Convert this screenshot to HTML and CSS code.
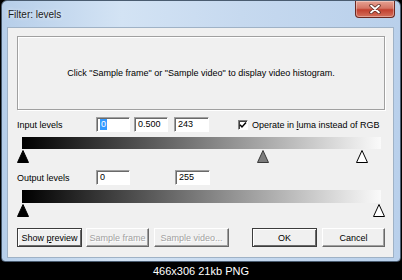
FILE: index.html
```html
<!DOCTYPE html>
<html>
<head>
<meta charset="utf-8">
<link rel="stylesheet" href="styles.css">
</head>
<body>
<div class="screen">
  <div class="window">
    <div class="titlebar">
      <span class="title">Filter: levels</span>
      <div class="close">
        <svg width="14" height="10" viewBox="0 0 14 10">
          <path d="M3 1.5 L11 8.5 M11 1.5 L3 8.5" stroke="#5a2a22" stroke-width="3.4" stroke-linecap="round"/>
          <path d="M3 1.5 L11 8.5 M11 1.5 L3 8.5" stroke="#ffffff" stroke-width="1.8" stroke-linecap="round"/>
        </svg>
      </div>
    </div>
    <div class="client">
      <div class="histogram">Click "Sample frame" or "Sample video" to display video histogram.</div>

      <div class="row">
        <span class="label">Input levels</span>
        <div class="field f1"><span class="hl">0</span></div>
        <div class="field f2">0.500</div>
        <div class="field f3">243</div>
        <div class="check">
          <span class="box">
            <svg width="8" height="8" viewBox="0 0 8 8"><path d="M1 3.8 L3 6 L7 1.6" fill="none" stroke="#000" stroke-width="1.5"/></svg>
          </span>
          <span>Operate in <u>l</u>uma instead of RGB</span>
        </div>
      </div>
      <div class="slider">
        <div class="bar"></div>
        <div class="track">
          <svg class="tri" style="left:-5px" width="12" height="13" viewBox="0 0 12 13"><polygon points="6,0.5 11.5,12.5 0.5,12.5" fill="#000" stroke="#000"/></svg>
          <svg class="tri" style="left:235px" width="12" height="13" viewBox="0 0 12 13"><polygon points="6,0.5 11.5,12.5 0.5,12.5" fill="#7c7c7c" stroke="#3a3a3a"/></svg>
          <svg class="tri" style="left:334px" width="12" height="13" viewBox="0 0 12 13"><polygon points="6,0.5 11.5,12.5 0.5,12.5" fill="#fff" stroke="#000"/></svg>
        </div>
      </div>

      <div class="row out">
        <span class="label">Output levels</span>
        <div class="field f1">0</div>
        <div class="field f4">255</div>
      </div>
      <div class="slider out">
        <div class="bar"></div>
        <div class="track">
          <svg class="tri" style="left:-5px" width="12" height="13" viewBox="0 0 12 13"><polygon points="6,0.5 11.5,12.5 0.5,12.5" fill="#000" stroke="#000"/></svg>
          <svg class="tri" style="left:351px" width="12" height="13" viewBox="0 0 12 13"><polygon points="6,0.5 11.5,12.5 0.5,12.5" fill="#fff" stroke="#000"/></svg>
        </div>
      </div>

      <div class="buttons">
        <div class="btn default b1"><span>Show <u>p</u>review</span></div>
        <div class="btn disabled b2"><span>Sample frame</span></div>
        <div class="btn disabled b3"><span>Sample video...</span></div>
        <div class="btn default b4"><span>OK</span></div>
        <div class="btn b5"><span>Cancel</span></div>
      </div>
    </div>
  </div>
  <div class="caption">466x306 21kb PNG</div>
</div>
</body>
</html>
```
FILE: styles.css
```css
* { box-sizing: border-box; }
html, body { margin: 0; padding: 0; }
body {
  background: #000;
  width: 402px;
  height: 280px;
  overflow: hidden;
  font-family: "Liberation Sans", Arial, sans-serif;
  font-size: 9px;
  color: #000;
}
.screen {
  width: 402px;
  height: 280px;
  background: #000;
  display: flex;
  flex-direction: column;
}
.window {
  margin-left: 1px;
  width: 400px;
  height: 262px;
  border: 1px solid #4a5c70;
  border-radius: 6px 6px 4px 4px;
  background: linear-gradient(to right, #b6cee9 0, #d3e3f4 30%, #c6d9ef 60%, #b9d0eb 100%);
  padding: 0 6px 3px 5px;
  display: flex;
  flex-direction: column;
}
.titlebar {
  height: 26px;
  display: flex;
  align-items: flex-start;
}
.title {
  margin-left: 1px;
  margin-top: 8px;
  font-size: 10px;
  color: #1a1a1a;
  text-shadow: 0 0 4px #fff;
}
.close {
  margin-left: auto;
  margin-right: -1px;
  width: 40px;
  height: 17px;
  border: 1px solid #6b2820;
  border-top: none;
  border-radius: 0 0 4px 4px;
  background: linear-gradient(#e6a293 0, #d47565 45%, #c2402f 55%, #d4705c 100%);
  box-shadow: inset 0 0 0 1px rgba(255,255,255,0.35);
  display: flex;
  align-items: center;
  justify-content: center;
}
.client {
  flex: 1;
  border: 1px solid #9fb2c6;
  background: #f0f0f0;
  padding-left: 9px;
  display: flex;
  flex-direction: column;
}
.histogram {
  margin-top: 8px;
  width: 368px;
  height: 74px;
  border: 1px solid #a0a0a0;
  box-shadow: inset 1px 1px 0 #fff, 1px 1px 0 #fff;
  display: flex;
  align-items: center;
  justify-content: center;
}
.row {
  margin-top: 7px;
  height: 15px;
  display: flex;
  align-items: center;
}
.label {
  width: 79px;
}
.field {
  height: 15px;
  width: 34px;
  background: #fff;
  border: 1px solid;
  border-color: #a0a0a0 #fff #fff #a0a0a0;
  box-shadow: inset 1px 1px 0 #6a6a6a;
  padding: 0 0 0 3px;
  display: flex;
  align-items: center;
  line-height: 11px;
}
.f2 { margin-left: 4px; }
.f3 { margin-left: 6px; width: 35px; }
.f4 { margin-left: 45px; width: 35px; }
.hl {
  background: #3399ff;
  color: #fff;
  padding: 0 1px;
  line-height: 11px;
}
.check {
  margin-left: 29px;
  display: flex;
  align-items: center;
}
.box {
  width: 10px;
  height: 10px;
  background: #fff;
  border: 1px solid;
  border-color: #808080 #fff #fff #808080;
  box-shadow: inset 1px 1px 0 #404040;
  margin-right: 4px;
  display: flex;
  align-items: center;
  justify-content: center;
}
.slider {
  margin-left: 5px;
  width: 359px;
}
.bar {
  margin-top: 5px;
  height: 12px;
  background: linear-gradient(to right, #000 0, #fafafa 100%);
}
.slider.out .bar { height: 13px; }
.track {
  position: relative;
  margin-top: 1px;
  height: 13px;
}
.tri {
  position: absolute;
  top: 0;
}
.buttons {
  margin-top: 11px;
  height: 19px;
  display: flex;
}
.btn {
  height: 19px;
  border: 1px solid;
  border-color: #fff #696969 #696969 #fff;
  box-shadow: inset -1px -1px 0 #a0a0a0;
  background: #f0f0f0;
  display: flex;
  align-items: center;
  justify-content: center;
  white-space: nowrap;
}
.btn.default {
  border-color: #3c3c3c;
  box-shadow: inset 1px 1px 0 #fff, inset -1px -1px 0 #696969;
}
.btn.disabled {
  color: #a0a0a0;
  text-shadow: 1px 1px 0 #fff;
}
.b1 { width: 65px; }
.b2 { width: 63px; margin-left: 4px; }
.b3 { width: 75px; margin-left: 5px; }
.b4 { width: 65px; margin-left: 23px; }
.b5 { width: 63px; margin-left: 5px; }
.caption {
  height: 18px;
  color: #fff;
  font-size: 11px;
  display: flex;
  align-items: center;
  justify-content: center;
}
```
